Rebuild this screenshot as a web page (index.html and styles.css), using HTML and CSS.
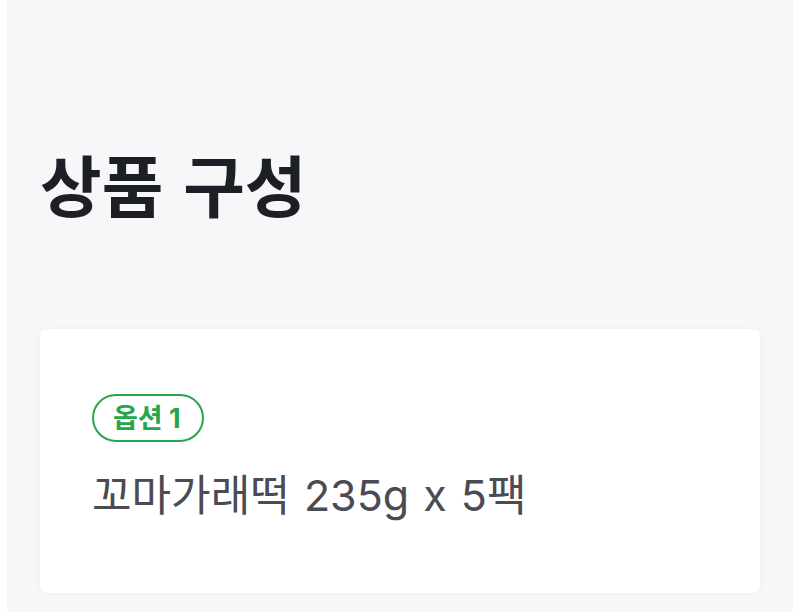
FILE: index.html
```html
<!DOCTYPE html>
<html lang="ko">
<head>
<meta charset="utf-8">
<link rel="stylesheet" href="styles.css">
</head>
<body>
<main class="page">
  <h1 class="title">상품 구성</h1>
  <section class="card">
    <span class="badge">옵션 1</span>
    <p class="item">꼬마가래떡 235g x 5팩</p>
  </section>
</main>
</body>
</html>
```
FILE: styles.css
```css
html, body {
  margin: 0;
  padding: 0;
  background: #ffffff;
}
body {
  font-family: Inter, "Noto Sans CJK KR", "Noto Sans", sans-serif;
}
.page {
  margin: 0 7px;
  height: 612px;
  box-sizing: border-box;
  background: #f7f7f9;
  padding: 143px 33px 0 33px;
  display: flex;
  flex-direction: column;
}
.title {
  margin: 0;
  font-size: 67px;
  font-weight: 700;
  line-height: 90px;
  color: #1d1f27;
  word-spacing: 4px;
}
.card {
  margin-top: 96px;
  height: 264px;
  box-sizing: border-box;
  background: #ffffff;
  border-radius: 7px;
  box-shadow: 0 0 10px rgba(0, 0, 0, 0.03);
  padding: 65px 52px 0 52px;
  display: flex;
  flex-direction: column;
  align-items: flex-start;
}
.badge {
  display: inline-flex;
  align-items: center;
  height: 48px;
  box-sizing: border-box;
  padding: 0 21px 0 19px;
  border: 2px solid #27a74a;
  border-radius: 24px;
  color: #27a74a;
  font-size: 27px;
  font-weight: 700;
  line-height: 1;
}
.item {
  margin: 23px 0 0 0;
  font-size: 43px;
  line-height: 60px;
  color: #4a4b53;
  font-weight: 400;
  word-spacing: 2px;
}
```
